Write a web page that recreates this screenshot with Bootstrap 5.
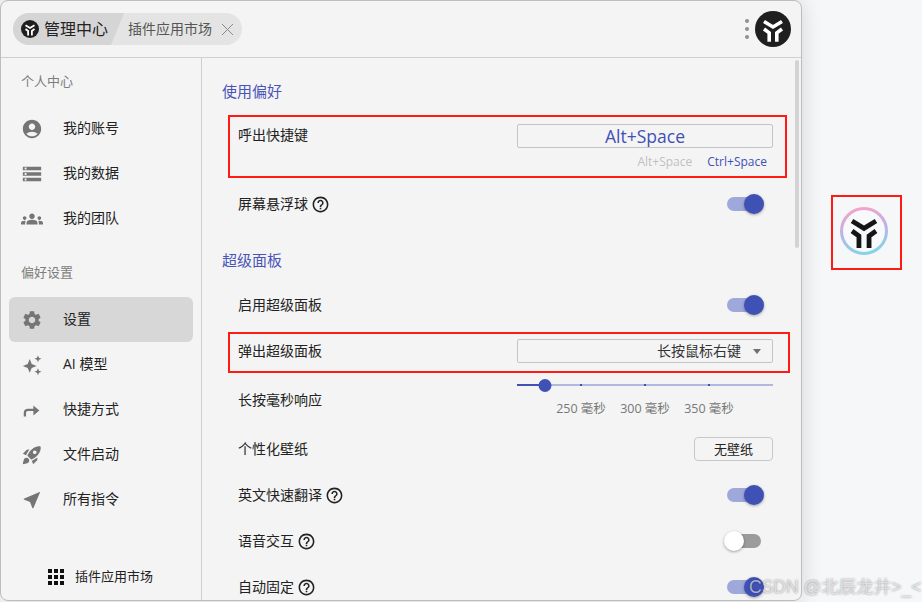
<!DOCTYPE html>
<html lang="zh-CN">
<head>
<meta charset="utf-8">
<title>设置</title>
<link href="https://cdn.jsdelivr.net/npm/bootstrap@5.3.0/dist/css/bootstrap.min.css" rel="stylesheet">
<style>
html,body{height:602px;overflow:hidden}
body{background:#f6f7f9;font-family:"Open Sans","Noto Sans CJK SC",sans-serif;font-size:14px;color:#222;position:relative;width:922px}
.appwin{width:802px;height:601px;background:#f4f4f4;border:1px solid #bdbdbd;border-radius:8px;box-shadow:0 0 22px rgba(0,0,0,.14);overflow:hidden;flex:none}
.apphead{height:57px;border-bottom:1px solid #cfcfcf;padding:0 10px 0 12px;flex:none}
.tabpill{height:32px;width:229px;background:#e4e4e4;border-radius:16px;overflow:hidden}
.tabact{width:111px;height:32px;background:#d5d5d5;clip-path:polygon(0 0,100% 0,calc(100% - 13px) 100%,0 100%);padding-left:8px;gap:5px;font-size:16px;color:#222;flex:none}
.tabmore{font-size:14px;color:#555;padding-left:4px;margin-bottom:2px}
.tabclose{margin-left:9px}
.dotcol{gap:4px;margin-right:6px}
.dotcol i{display:block;width:4px;height:4px;border-radius:50%;background:#8e8e8e}
.appside{width:201px;border-right:1px solid #cfcfcf;flex:none;padding:0 8px}
.grouplbl{font-size:13px;color:#7d7d7d;line-height:20px;padding:13px 0 15px 12px}
.grouplbl.lower{padding-top:21px}
.sideitem{height:45px;padding-left:12px;gap:20px;color:#222;font-size:14px;border-radius:6px;text-decoration:none}
.sideitem span,.setrow>span{margin-bottom:2px}
.sideitem.act{background:#d7d7d7}
.sideitem svg{width:22px;height:22px;fill:#757575;flex:none}
.marketitem{height:48px;gap:11px;font-size:13px;color:#222;padding:2px 0 0 39px;margin-top:auto}
.appmain{position:relative;min-width:0}
.scrollthumb{position:absolute;right:2px;top:2px;width:4px;height:188px;background:#d3d3d3;border-radius:2px}
.mainbody{padding:17px 28px 0 20px}
.sectitle{height:32px;line-height:32px;font-size:15px;color:#4a55b8}
.sectitle.second{margin-top:17px;margin-bottom:6px}
.setrow{height:46px;padding-left:16px;font-size:14px;color:#222}
.setrow.tall{height:52px}
.shortrow{padding:17px 0 9px 16px;font-size:14px}
.shortlabel{line-height:22px}
.rightcol{width:256px;flex:none}
.keybox{height:24px;line-height:22px;border:1px solid #c4c4c4;border-radius:2px;text-align:center;color:#3f51b5;font-size:17.5px}
.keyhints{height:20px;margin-top:4px;gap:15px;font-size:12px;padding-right:6px}
.keyoff{color:#c0c0c0}
.keyon{color:#3f51b5}
.helpico{width:19px;height:19px;fill:#222;margin:2px 0 0 3px;flex:none}
.togtrack{width:34px;height:14px;border-radius:7px;background:#9fa8da;margin-right:12px}
.togtrack.off{background:#9b9b9b}
.togknob{width:20px;height:20px;border-radius:50%;background:#3f51b5;box-shadow:0 1px 3px rgba(0,0,0,.35);margin-right:-3px;flex:none}
.togtrack.off .togknob{background:#fff;margin-right:0;margin-left:-3px}
.selectbox{height:24px;border:1px solid #c4c4c4;border-radius:2px;font-size:14px;color:#333;padding-right:11px;gap:12px}
.selectbox span{margin-bottom:2px}
.caretmark{width:0;height:0;border-left:4px solid transparent;border-right:4px solid transparent;border-top:5px solid #6f6f6f}
.sliderwrap{padding-top:5px;align-self:flex-start}
.slidertrack{height:13px;position:relative}
.slidertrack::before{content:"";position:absolute;left:0;right:0;top:5px;height:2px;background:#b1b8e0}
.sliderfill{position:absolute;left:0;top:5px;height:2px;background:#3f51b5}
.sliderknob{position:absolute;top:0;width:13px;height:13px;border-radius:50%;background:#3f51b5;transform:translateX(-6.5px)}
.slidertick{position:absolute;top:5px;width:2px;height:2px;background:#3f51b5}
.sliderlabels{margin-top:8px;padding:0 32px;font-size:12.5px;color:#777;line-height:18px}
.sliderlabels span{width:64px;text-align:center;white-space:nowrap}
.plainbtn{--bs-btn-padding-y:0;--bs-btn-padding-x:0;--bs-btn-font-size:13px;--bs-btn-color:#222;--bs-btn-border-color:#c8c8c8;--bs-btn-border-radius:4px;width:79px;height:24px;line-height:20px}
.redmark{position:absolute;border:2px solid #ff1a12;pointer-events:none}
.redone{left:228px;top:115px;width:559px;height:63px}
.redtwo{left:228px;top:332px;width:562px;height:41px}
.logozone{width:71px;height:75px;border:2px solid #ff1a12;margin:195px 0 0 29px;padding:0 5px 3px 0;flex:none}
.wmark{position:absolute;left:749px;top:575px;font-family:"Liberation Sans","Noto Sans CJK SC",sans-serif;font-size:17.5px;line-height:24px;color:rgba(255,255,255,.6);text-shadow:0 0 2px rgba(0,0,0,.45);white-space:nowrap}
</style>
</head>
<body>
<div class="d-flex">
  <div class="appwin d-flex flex-column">
    <header class="apphead d-flex align-items-center">
      <div class="tabpill d-flex align-items-center">
        <div class="tabact d-flex align-items-center">
          <svg width="18" height="18" viewBox="0 0 36 36"><circle cx="18" cy="18" r="18" fill="#1f1f1f"/><path d="M9 10.500 18 16l9-5.500M9 18l5.200 3.800v9M27 18l-5.200 3.800v9" fill="none" stroke="#fff" stroke-width="3.600"/></svg>
          <span>管理中心</span>
        </div>
        <span class="tabmore">插件应用市场</span>
        <svg class="tabclose" width="13" height="13" viewBox="0 0 13 13"><path d="M1 1l11 11M12 1 1 12" stroke="#8a8a8a" stroke-width="1" fill="none"/></svg>
      </div>
      <div class="ms-auto d-flex align-items-center">
        <div class="dotcol d-flex flex-column"><i></i><i></i><i></i></div>
        <svg width="36" height="36" viewBox="0 0 36 36"><circle cx="18" cy="18" r="18" fill="#1f1f1f"/><path d="M9 10.500 18 16l9-5.500M9 18l5.200 3.800v9M27 18l-5.200 3.800v9" fill="none" stroke="#fff" stroke-width="3.600"/></svg>
      </div>
    </header>
    <div class="d-flex flex-grow-1 overflow-hidden">
      <aside class="appside d-flex flex-column">
        <div class="grouplbl">个人中心</div>
        <div class="sideitem d-flex align-items-center"><svg viewBox="0 0 24 24"><path d="M12 2C6.48 2 2 6.48 2 12s4.48 10 10 10 10-4.48 10-10S17.52 2 12 2zm0 4c1.93 0 3.5 1.57 3.5 3.5S13.93 13 12 13s-3.5-1.57-3.5-3.5S10.07 6 12 6zm0 14c-2.03 0-4.43-.82-6.14-2.88C7.55 15.8 9.68 15 12 15s4.45.8 6.14 2.12C16.43 19.18 14.03 20 12 20z"/></svg><span>我的账号</span></div>
        <div class="sideitem d-flex align-items-center"><svg viewBox="0 0 24 24"><path d="M2 20h20v-4H2v4zm2-3h2v2H4v-2zM2 4v4h20V4H2zm4 3H4V5h2v2zm-4 7h20v-4H2v4zm2-3h2v2H4v-2z"/></svg><span>我的数据</span></div>
        <div class="sideitem d-flex align-items-center"><svg viewBox="0 0 24 24"><path d="M12 12.75c1.63 0 3.07.39 4.24.9 1.08.48 1.76 1.56 1.76 2.73V18H6v-1.61c0-1.18.68-2.26 1.76-2.73 1.17-.52 2.61-.91 4.24-.91zM4 13c1.1 0 2-.9 2-2s-.9-2-2-2-2 .9-2 2 .9 2 2 2zm1.13 1.1c-.37-.06-.74-.1-1.13-.1-.99 0-1.93.21-2.78.58C.48 14.9 0 15.62 0 16.43V18h4.5v-1.61c0-.83.23-1.61.63-2.29zM20 13c1.1 0 2-.9 2-2s-.9-2-2-2-2 .9-2 2 .9 2 2 2zm4 3.43c0-.81-.48-1.53-1.22-1.85-.85-.37-1.79-.58-2.78-.58-.39 0-.76.04-1.13.1.4.68.63 1.46.63 2.29V18H24v-1.57zM12 6c1.66 0 3 1.34 3 3s-1.34 3-3 3-3-1.34-3-3 1.34-3 3-3z"/></svg><span>我的团队</span></div>
        <div class="grouplbl lower">偏好设置</div>
        <div class="sideitem act d-flex align-items-center"><svg viewBox="0 0 24 24"><path d="M19.14 12.94c.04-.3.06-.61.06-.94 0-.32-.02-.64-.07-.94l2.03-1.58c.18-.14.23-.41.12-.61l-1.92-3.32c-.12-.22-.37-.29-.59-.22l-2.39.96c-.5-.38-1.03-.7-1.62-.94l-.36-2.54c-.04-.24-.24-.41-.48-.41h-3.84c-.24 0-.43.17-.47.41l-.36 2.54c-.59.24-1.13.57-1.62.94l-2.39-.96c-.22-.08-.47 0-.59.22L2.74 8.87c-.12.21-.08.47.12.61l2.03 1.58c-.05.3-.09.63-.09.94s.02.64.07.94l-2.03 1.58c-.18.14-.23.41-.12.61l1.92 3.32c.12.22.37.29.59.22l2.39-.96c.5.38 1.03.7 1.62.94l.36 2.54c.05.24.24.41.48.41h3.84c.24 0 .44-.17.47-.41l.36-2.54c.59-.24 1.13-.56 1.62-.94l2.39.96c.22.08.47 0 .59-.22l1.92-3.32c.12-.22.07-.47-.12-.61l-2.01-1.58zM12 15.6c-1.98 0-3.6-1.62-3.6-3.6s1.62-3.6 3.6-3.6 3.6 1.62 3.6 3.6-1.62 3.6-3.6 3.6z"/></svg><span>设置</span></div>
        <div class="sideitem d-flex align-items-center"><svg viewBox="0 0 24 24"><path d="M9.500 5.500 11.700 10.800 17 13l-5.300 2.200L9.500 20.500 7.300 15.200 2 13l5.300-2.200zM18.500 1.500l1.100 2.700 2.700 1.100-2.700 1.100-1.100 2.700-1.100-2.700-2.700-1.100 2.700-1.100zM18.500 15.500l1.100 2.700 2.700 1.100-2.700 1.100-1.100 2.700-1.100-2.700-2.700-1.100 2.700-1.100z"/></svg><span>AI 模型</span></div>
        <div class="sideitem d-flex align-items-center"><svg viewBox="0 0 24 24"><path d="M3 19v-4a4.500 4.500 0 0 1 4.500-4.500h6V7L20 12.500 13.500 18v-5h-6a2 2 0 0 0-2 2v4z"/></svg><span>快捷方式</span></div>
        <div class="sideitem d-flex align-items-center"><svg viewBox="0 0 24 24"><path d="M9.190 6.350c-2.040 2.290-3.440 5.580-3.570 5.890L2 10.690l4.050-4.050c.47-.47 1.150-.68 1.810-.55l1.330.26zM11.170 17s3.740-1.550 5.890-3.700c5.400-5.400 4.500-9.620 4.210-10.570-.95-.3-5.170-1.190-10.570 4.210C8.550 9.090 7 12.830 7 12.830L11.170 17zm6.480-2.190c-2.290 2.040-5.580 3.440-5.890 3.570L13.310 22l4.050-4.050c.47-.47.68-1.150.55-1.810l-.26-1.330zM9 18c0 .83-.34 1.580-.88 2.120C6.940 21.300 2 22 2 22s.7-4.940 1.880-6.120C4.420 15.340 5.170 15 6 15c1.660 0 3 1.340 3 3zm4-9c0-1.100.9-2 2-2s2 .9 2 2-.9 2-2 2-2-.9-2-2z"/></svg><span>文件启动</span></div>
        <div class="sideitem d-flex align-items-center"><svg viewBox="0 0 24 24"><path d="M21 3 3 10.530v.98l6.840 2.650L12.480 21h.98L21 3z"/></svg><span>所有指令</span></div>
        <div class="marketitem d-flex align-items-center">
          <svg width="16" height="16" viewBox="0 0 16 16" fill="#111"><path d="M0 0h4v4H0zM6 0h4v4H6zM12 0h4v4h-4zM0 6h4v4H0zM6 6h4v4H6zM12 6h4v4h-4zM0 12h4v4H0zM6 12h4v4H6zM12 12h4v4h-4z"/></svg>
          <span>插件应用市场</span>
        </div>
      </aside>
      <main class="appmain flex-grow-1 overflow-hidden">
        <div class="scrollthumb"></div>
        <div class="mainbody">
          <div class="sectitle">使用偏好</div>
          <div class="shortrow d-flex justify-content-between">
            <span class="shortlabel">呼出快捷键</span>
            <div class="rightcol">
              <div class="keybox">Alt+Space</div>
              <div class="keyhints d-flex align-items-center justify-content-end"><span class="keyoff">Alt+Space</span><span class="keyon">Ctrl+Space</span></div>
            </div>
          </div>
          <div class="setrow d-flex align-items-center justify-content-between">
            <span class="d-flex align-items-center">屏幕悬浮球<svg class="helpico" viewBox="0 0 24 24"><path d="M11 18h2v-2h-2v2zm1-16C6.480 2 2 6.480 2 12s4.480 10 10 10 10-4.480 10-10S17.520 2 12 2zm0 18c-4.410 0-8-3.590-8-8s3.590-8 8-8 8 3.590 8 8-3.590 8-8 8zm0-14c-2.210 0-4 1.790-4 4h2c0-1.100.9-2 2-2s2 .9 2 2c0 2-3 1.750-3 5h2c0-2.250 3-2.500 3-5 0-2.210-1.790-4-4-4z"/></svg></span>
            <div class="togtrack d-flex align-items-center justify-content-end"><div class="togknob"></div></div>
          </div>
          <div class="sectitle second">超级面板</div>
          <div class="setrow d-flex align-items-center justify-content-between">
            <span>启用超级面板</span>
            <div class="togtrack d-flex align-items-center justify-content-end"><div class="togknob"></div></div>
          </div>
          <div class="setrow d-flex align-items-center justify-content-between">
            <span>弹出超级面板</span>
            <div class="rightcol selectbox d-flex align-items-center justify-content-end"><span>长按鼠标右键</span><i class="caretmark"></i></div>
          </div>
          <div class="setrow tall d-flex align-items-center justify-content-between">
            <span>长按毫秒响应</span>
            <div class="rightcol sliderwrap">
              <div class="slidertrack">
                <div class="sliderfill" style="width:28px"></div>
                <div class="slidertick" style="left:63px"></div>
                <div class="slidertick" style="left:127px"></div>
                <div class="slidertick" style="left:191px"></div>
                <div class="sliderknob" style="left:28px"></div>
              </div>
              <div class="sliderlabels d-flex"><span>250 毫秒</span><span>300 毫秒</span><span>350 毫秒</span></div>
            </div>
          </div>
          <div class="setrow d-flex align-items-center justify-content-between">
            <span>个性化壁纸</span>
            <button type="button" class="btn plainbtn">无壁纸</button>
          </div>
          <div class="setrow d-flex align-items-center justify-content-between">
            <span class="d-flex align-items-center">英文快速翻译<svg class="helpico" viewBox="0 0 24 24"><path d="M11 18h2v-2h-2v2zm1-16C6.480 2 2 6.480 2 12s4.480 10 10 10 10-4.480 10-10S17.520 2 12 2zm0 18c-4.410 0-8-3.590-8-8s3.590-8 8-8 8 3.590 8 8-3.590 8-8 8zm0-14c-2.210 0-4 1.790-4 4h2c0-1.100.9-2 2-2s2 .9 2 2c0 2-3 1.750-3 5h2c0-2.250 3-2.500 3-5 0-2.210-1.790-4-4-4z"/></svg></span>
            <div class="togtrack d-flex align-items-center justify-content-end"><div class="togknob"></div></div>
          </div>
          <div class="setrow d-flex align-items-center justify-content-between">
            <span class="d-flex align-items-center">语音交互<svg class="helpico" viewBox="0 0 24 24"><path d="M11 18h2v-2h-2v2zm1-16C6.480 2 2 6.480 2 12s4.480 10 10 10 10-4.480 10-10S17.520 2 12 2zm0 18c-4.410 0-8-3.590-8-8s3.590-8 8-8 8 3.590 8 8-3.590 8-8 8zm0-14c-2.210 0-4 1.790-4 4h2c0-1.100.9-2 2-2s2 .9 2 2c0 2-3 1.750-3 5h2c0-2.250 3-2.500 3-5 0-2.210-1.790-4-4-4z"/></svg></span>
            <div class="togtrack off d-flex align-items-center"><div class="togknob"></div></div>
          </div>
          <div class="setrow d-flex align-items-center justify-content-between">
            <span class="d-flex align-items-center">自动固定<svg class="helpico" viewBox="0 0 24 24"><path d="M11 18h2v-2h-2v2zm1-16C6.480 2 2 6.480 2 12s4.480 10 10 10 10-4.480 10-10S17.520 2 12 2zm0 18c-4.410 0-8-3.590-8-8s3.590-8 8-8 8 3.590 8 8-3.590 8-8 8zm0-14c-2.210 0-4 1.790-4 4h2c0-1.100.9-2 2-2s2 .9 2 2c0 2-3 1.750-3 5h2c0-2.250 3-2.500 3-5 0-2.210-1.790-4-4-4z"/></svg></span>
            <div class="togtrack d-flex align-items-center justify-content-end"><div class="togknob"></div></div>
          </div>
        </div>
      </main>
    </div>
  </div>
  <div class="logozone d-flex align-items-center justify-content-center">
    <svg width="50" height="50" viewBox="0 0 50 50">
      <defs><linearGradient id="ringgrad" x1="0.3" y1="0" x2="0.5" y2="1"><stop offset="0" stop-color="#f3a3cb"/><stop offset=".5" stop-color="#bcb3e8"/><stop offset="1" stop-color="#86d3e8"/></linearGradient></defs>
      <circle cx="25" cy="25" r="22.500" fill="#f8f9fb" stroke="url(#ringgrad)" stroke-width="3"/>
      <g transform="translate(25 25) scale(1.33) translate(-18 -18)"><path d="M9 10.500 18 16l9-5.500M9 18l5.200 3.800v9M27 18l-5.200 3.800v9" fill="none" stroke="#151515" stroke-width="3.600"/></g>
    </svg>
  </div>
</div>
<div class="redmark redone"></div>
<div class="redmark redtwo"></div>
<div class="wmark">CSDN @北辰龙井&gt;_&lt;</div>
<script src="https://cdn.jsdelivr.net/npm/bootstrap@5.3.0/dist/js/bootstrap.bundle.min.js"></script>
</body>
</html>
